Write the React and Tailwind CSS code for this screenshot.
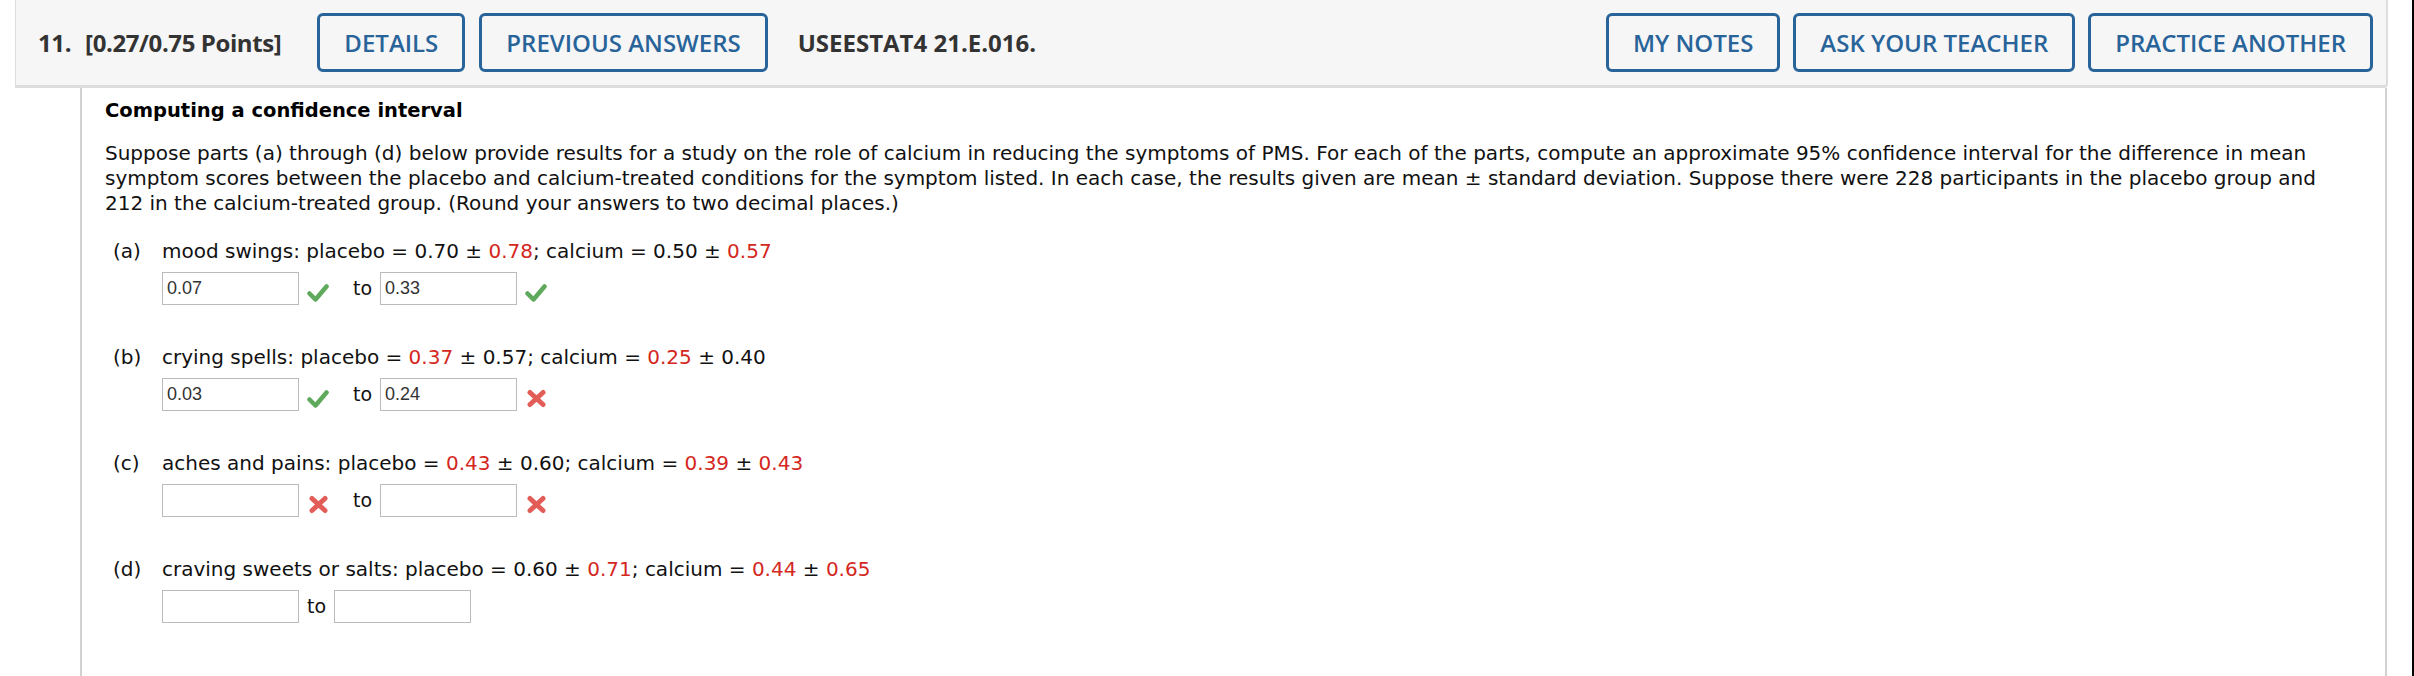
const parts = [
  {
    key: 'a',
    label: 'mood swings',
    p: ['0.70', '0.78'],
    c: ['0.50', '0.57'],
    red: [false, true, false, true],
    values: ['0.07', '0.33'],
    marks: ['ok', 'ok'],
  },
  {
    key: 'b',
    label: 'crying spells',
    p: ['0.37', '0.57'],
    c: ['0.25', '0.40'],
    red: [true, false, true, false],
    values: ['0.03', '0.24'],
    marks: ['ok', 'bad'],
  },
  {
    key: 'c',
    label: 'aches and pains',
    p: ['0.43', '0.60'],
    c: ['0.39', '0.43'],
    red: [true, false, true, true],
    values: ['', ''],
    marks: ['bad', 'bad'],
  },
  {
    key: 'd',
    label: 'craving sweets or salts',
    p: ['0.60', '0.71'],
    c: ['0.44', '0.65'],
    red: [false, true, true, true],
    values: ['', ''],
    marks: [null, null],
  },
];

function Num({ v, red }) {
  return <span className={red ? 'text-[#d4271e]' : ''}>{v}</span>;
}

function Check() {
  return (
    <svg className="w-[22px] h-[18px]" viewBox="0 0 22 18">
      <path d="M2.5 9.5 L8.5 15.5 L19.5 2.5" fill="none" stroke="#5fa95c" strokeWidth="4.5" strokeLinecap="round" strokeLinejoin="round" />
    </svg>
  );
}

function Cross() {
  return (
    <svg className="w-[21px] h-[19px]" viewBox="0 0 21 19">
      <path d="M4 3.5 L17 15.5 M17 3.5 L4 15.5" fill="none" stroke="#e35d58" strokeWidth="5" strokeLinecap="round" />
    </svg>
  );
}

function Mark({ type }) {
  if (!type) return null;
  return (
    <span className="ml-[8px] w-[22px] mt-[8px] flex items-center justify-center">
      {type === 'ok' ? <Check /> : <Cross />}
    </span>
  );
}

function AnswerBox({ value }) {
  return (
    <div className="w-[137px] h-[33px] border border-[#bbbbbb] bg-white px-[4px] flex items-center text-[18px] text-[#333] font-['Liberation_Sans',Arial,sans-serif]">
      {value}
    </div>
  );
}

function Part({ part }) {
  const [r1, r2, r3, r4] = part.red;
  return (
    <div className="mb-[40px]">
      <div className="flex h-[25px] items-center">
        <span className="pl-[8px] w-[57px]">({part.key})</span>
        <span>
          {part.label}: placebo = <Num v={part.p[0]} red={r1} /> ± <Num v={part.p[1]} red={r2} />; calcium ={' '}
          <Num v={part.c[0]} red={r3} /> ± <Num v={part.c[1]} red={r4} />
        </span>
      </div>
      <div className="flex items-center mt-[8px] ml-[57px] h-[33px] text-[19px]">
        <AnswerBox value={part.values[0]} />
        <Mark type={part.marks[0]} />
        <span className={part.marks[0] ? 'ml-[24px]' : 'ml-[8px]'}>to</span>
        <span className="ml-[8px]">
          <AnswerBox value={part.values[1]} />
        </span>
        <Mark type={part.marks[1]} />
      </div>
    </div>
  );
}

function HeaderButton({ children }) {
  return (
    <button className="h-[59px] px-[24px] border-[3px] border-[#28649a] rounded-[6px] text-[#28649a] text-[24px] font-semibold">
      {children}
    </button>
  );
}

export default function App() {
  return (
    <div className="w-[2414px] h-[676px] bg-white flex overflow-hidden">
      <div className="flex-1 flex flex-col">
        <header className="ml-[15px] mr-[24px] h-[88px] shrink-0 bg-[#f6f6f6] border-l border-r-2 border-b-[3px] border-[#dddddd] rounded-br-[4px] flex items-center pl-[22px] pr-[13px] font-['Open_Sans',sans-serif] text-[#333]">
          <div className="text-[24px] font-bold tracking-[-0.4px] mr-[36px]">
            11.<span className="ml-[14px]">[0.27/0.75 Points]</span>
          </div>
          <div className="flex gap-[14px]">
            <HeaderButton>DETAILS</HeaderButton>
            <HeaderButton>PREVIOUS ANSWERS</HeaderButton>
          </div>
          <div className="ml-[30px] text-[24px] font-bold">USEESTAT4 21.E.016.</div>
          <div className="ml-auto flex gap-[13px]">
            <HeaderButton>MY NOTES</HeaderButton>
            <HeaderButton>ASK YOUR TEACHER</HeaderButton>
            <HeaderButton>PRACTICE ANOTHER</HeaderButton>
          </div>
        </header>
        <main className="ml-[80px] mr-[25px] flex-1 border-l-2 border-r-2 border-[#d2d2d2] pl-[23px] pr-[40px] pt-[10px] font-['DejaVu_Sans',Verdana,sans-serif] text-[20px] leading-[25px] text-[#111]">
          <h2 className="font-bold text-black text-[19.5px]">Computing a confidence interval</h2>
          <p className="mt-[18px]">
            Suppose parts (a) through (d) below provide results for a study on the role of calcium in reducing the symptoms of PMS. For each of the parts, compute an approximate 95% confidence interval for the difference in mean symptom scores between the placebo and calcium-treated conditions for the symptom listed. In each case, the results given are mean ± standard deviation. Suppose there were 228 participants in the placebo group and 212 in the calcium-treated group. (Round your answers to two decimal places.)
          </p>
          <div className="mt-[23px]">
            {parts.map(part => (
              <Part key={part.key} part={part} />
            ))}
          </div>
        </main>
      </div>
      <div className="w-[2px] bg-black" />
    </div>
  );
}
